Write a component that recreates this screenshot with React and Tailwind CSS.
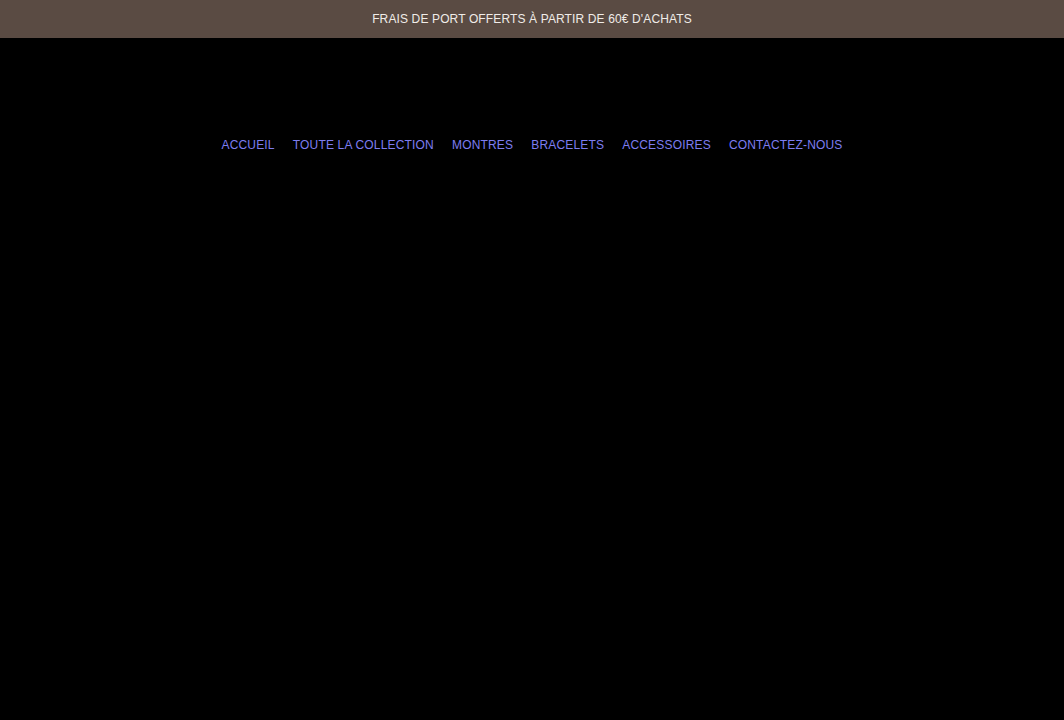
export default function App() {
  const items = ["ACCUEIL", "TOUTE LA COLLECTION", "MONTRES", "BRACELETS", "ACCESSOIRES", "CONTACTEZ-NOUS"];
  return (
    <div className="w-full min-h-[720px] bg-black" style={{ fontFamily: '"Liberation Sans", Arial, sans-serif' }}>
      <div className="h-[38px] bg-[#5a4b43] flex items-center justify-center">
        <span className="text-[12px] tracking-[0.13px] text-[#f0ece8]">FRAIS DE PORT OFFERTS À PARTIR DE 60€ D'ACHATS</span>
      </div>
      <nav className="pt-[99px] flex justify-center gap-[18px]">
        {items.map((t) => (
          <a key={t} className="text-[12px] tracking-[0.18px] text-[#7d7df0] leading-[16px]">{t}</a>
        ))}
      </nav>
    </div>
  );
}
